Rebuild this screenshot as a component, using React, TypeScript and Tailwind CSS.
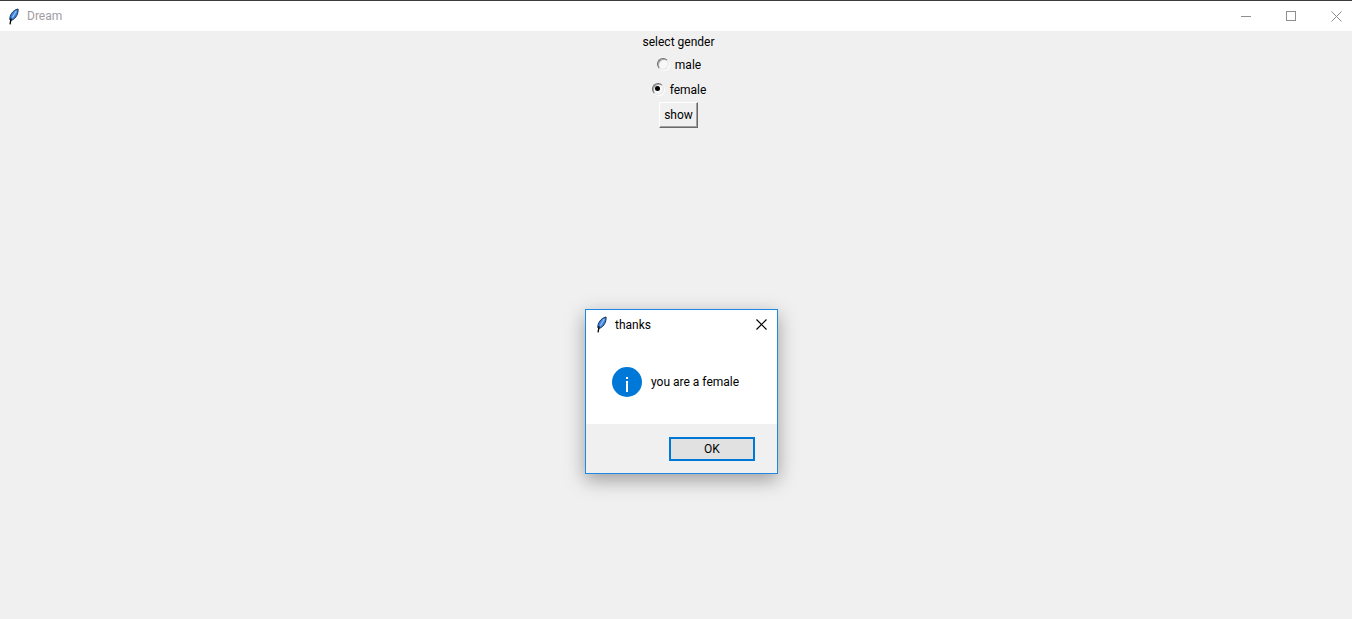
import React from 'react';

const font = { fontFamily: 'Roboto, "Noto Sans", sans-serif' };

const Feather = ({ className }: { className: string }) => (
  <svg viewBox="0 0 12 18" className={className}>
    <path d="M2 12.5C1.5 8 5 2 11 0.8C11.5 5.5 9 11 4 13.2Z" fill="#3d83e0" stroke="#14264a" strokeWidth="1" />
    <path d="M9 3L4.8 10" stroke="#a9cdf5" strokeWidth="1.1" fill="none" />
    <path d="M3.4 11L2.2 17.5" stroke="#000" strokeWidth="1.4" fill="none" />
  </svg>
);

const Radio = ({ checked }: { checked?: boolean }) => (
  <span className="relative -top-px w-[12px] h-[12px] rounded-full border border-t-[#6a6a6a] border-l-[#6a6a6a] border-r-[#e3e3e3] border-b-[#e3e3e3] bg-[#f7f7f7] shadow-[1px_1px_0_#fff,inset_1px_1px_0_#a8a8a8] shrink-0">
    {checked && <span className="absolute left-[2.5px] top-[2.5px] w-[5px] h-[5px] rounded-full bg-black" />}
  </span>
);

const RadioRow = ({ label, checked }: { label: string; checked?: boolean }) => (
  <div className="flex items-center gap-[6px] h-[25px] ml-px text-[12px] text-black">
    <Radio checked={checked} />
    <span className="pt-px">{label}</span>
  </div>
);

const Dialog = () => (
  <div className="absolute left-[585px] top-[309px] w-[193px] h-[165px] bg-white border border-[#1e88e5] shadow-[0_6px_18px_rgba(0,0,0,0.35)] flex flex-col">
    <div className="flex items-center h-[29px] pl-[10px] pr-[10px]">
      <Feather className="w-[11px] h-[17px]" />
      <span className="ml-[8px] pt-px text-[12px] text-black">thanks</span>
      <svg viewBox="0 0 11 11" className="ml-auto w-[11px] h-[11px]">
        <path d="M0.5 0.5L10.5 10.5M10.5 0.5L0.5 10.5" stroke="#000" strokeWidth="1.2" />
      </svg>
    </div>
    <div className="flex items-center flex-1 pl-[26px]">
      <svg viewBox="0 0 30 30" className="w-[30px] h-[30px]">
        <circle cx="15" cy="15" r="15" fill="#0078d7" />
        <rect x="14" y="10" width="2" height="2" fill="#fff" />
        <rect x="14" y="14" width="2" height="11" fill="#fff" />
      </svg>
      <span className="ml-[9px] pt-px text-[12px] text-black">you are a female</span>
    </div>
    <div className="h-[49px] bg-[#f0f0f0] flex pl-[83px] pt-[13px]">
      <button className="w-[86px] h-[24px] bg-[#e1e1e1] border-2 border-[#0078d7] text-[12px] text-black">OK</button>
    </div>
  </div>
);

export default function App() {
  return (
    <div className="relative w-[1352px] h-[619px] bg-[#f0f0f0] overflow-hidden flex flex-col" style={font}>
      <div className="h-px bg-[#3c3c3c]" />
      <div className="h-[30px] bg-white flex items-center pl-[8px]">
        <Feather className="w-[11px] h-[17px]" />
        <span className="ml-[8px] text-[12px] text-[#a39ba3]">Dream</span>
        <div className="ml-auto flex items-center h-full pr-[10px]">
          <div className="w-[10px] h-px bg-[#8e8e8e]" />
          <div className="ml-[35px] w-[10px] h-[10px] border border-[#8e8e8e]" />
          <svg viewBox="0 0 11 11" className="ml-[35px] w-[11px] h-[11px]">
            <path d="M0.5 0.5L10.5 10.5M10.5 0.5L0.5 10.5" stroke="#8e8e8e" strokeWidth="1" />
          </svg>
        </div>
      </div>
      <div className="flex flex-col items-center pl-[5px]">
        <div className="h-[21px] pt-px flex items-center text-[12px] text-black">select gender</div>
        <RadioRow label="male" />
        <RadioRow label="female" checked />
        <button className="w-[39px] h-[26px] bg-[#f0f0f0] border border-t-white border-l-white border-r-[#696969] border-b-[#696969] shadow-[inset_-1px_-1px_0_#a0a0a0] text-[12px] text-black">show</button>
      </div>
      <Dialog />
    </div>
  );
}
